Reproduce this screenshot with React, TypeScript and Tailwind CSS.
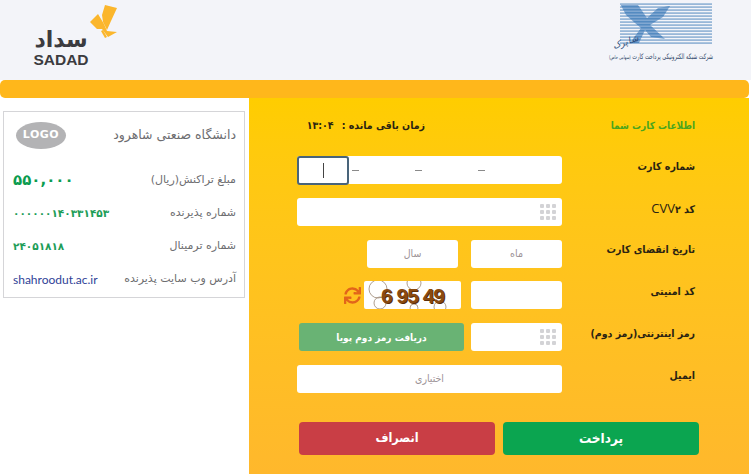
import React from "react";
import { FaSync } from "react-icons/fa";

const font = { fontFamily: '"DejaVu Sans", sans-serif' };

function Dots() {
  return (
    <svg width="16" height="16" viewBox="0 0 16 16" fill="#d3d3d6">
      {[0, 6, 12].flatMap((y) =>
        [0, 6, 12].map((x) => <rect key={`${x}-${y}`} x={x} y={y} width="4" height="4" rx="1" />)
      )}
    </svg>
  );
}

function SadadMark() {
  return (
    <svg width="30" height="36" viewBox="0 0 30 36" fill="#fbb62c">
      <polygon points="17,1 29,4 23,17 19,26 15,18 14,11" />
      <polygon points="2,18 10,10 16,20 19,27 29,28 20,33 14,25 9,25" />
      <polygon points="13,27 15,26 19,33 17,34" />
    </svg>
  );
}

function ShaparakMark() {
  const lines = Array.from({ length: 14 }, (_, i) => i * 3);
  return (
    <svg width="93" height="43" viewBox="0 0 93 43">
      <path d="M0.7 2 L18 2 L27 15 L38 5 L50 3 L43 14 L30 22 L45 36 L31 34 L25 27 L19 40 L10 40 L21 25 L15 20 L6 12 Z" fill="#4480bd" />
      {lines.map((y) => (
        <rect key={y} x="0" y={y + 0.5} width="92" height="1.2" fill="#6595c6" />
      ))}
      {lines.map((y) => (
        <rect key={`g${y}`} x="0" y={y + 1.7} width="92" height="1.3" fill="#f3f4f9" opacity="0.35" />
      ))}
    </svg>
  );
}

function Field({ label, children }: { label: React.ReactNode; children: React.ReactNode }) {
  return (
    <div className="flex h-[28px] items-center">
      <div className="w-[133px] shrink-0 pb-[7px] text-[10.5px] font-bold text-[#2a2312]">{label}</div>
      <div className="flex h-full w-[265px] items-stretch">{children}</div>
    </div>
  );
}

function Box({ className = "", children }: { className?: string; children?: React.ReactNode }) {
  return (
    <div className={`flex h-full items-center rounded-[3px] bg-white text-[10.5px] text-[#9c9296] ${className}`}>
      {children}
    </div>
  );
}

function InfoRow({ label, children, className = "" }: { label: string; children: React.ReactNode; className?: string }) {
  return (
    <div className={`flex h-[33px] items-center justify-between ${className}`}>
      <span className="text-[11px] text-[#6d6d70]">{label}</span>
      {children}
    </div>
  );
}

export default function App() {
  return (
    <div dir="rtl" className="h-[474px] w-[751px] overflow-hidden bg-white" style={font}>
      <header className="flex h-[80px] justify-between bg-[#f3f4f9] pl-[35px] pr-[38px]">
        <div className="flex h-full w-[100px] flex-col items-start pt-[3px]">
          <ShaparakMark />
          <div className="mr-[74px] mt-[-13px] h-[18px] -rotate-[20deg] whitespace-nowrap text-[9px] italic leading-[18px] text-[#2b4a78]" style={{ fontFamily: '"DejaVu Serif", serif' }}>
            شاپرک
          </div>
          <div className="scale-y-150 whitespace-nowrap text-[5px] leading-[10px] text-[#2f4468]">
            شرکت شبکه الکترونیکی پرداخت کارت <span className="text-[3.5px]">(سهامی خاص)</span>
          </div>
        </div>
        <div className="flex h-full w-[83px] flex-row-reverse items-start justify-end">
          <div className="flex w-[54px] flex-col items-center pt-[28px] text-[#3b3b40]">
            <div className="text-[22px] font-bold leading-[24px]">سداد</div>
            <div dir="ltr" className="text-[15.5px] font-bold leading-[16px]" style={{ fontFamily: '"Liberation Sans", sans-serif' }}>
              SADAD
            </div>
          </div>
          <div className="pt-[4px]">
            <SadadMark />
          </div>
        </div>
      </header>

      <div className="mr-[2px] h-[18px] w-[749px] rounded-[5px] bg-[#ffb71b]" />

      <div dir="ltr" className="mr-[2px] flex h-[376px] w-[749px]">
        <aside dir="rtl" className="w-[249px] pt-[13px]">
          <div className="ml-[3px] mr-[4px] h-[187px] w-[242px] border border-[#d5d5d8] bg-white pl-[9px] pr-[8px] pt-[7px]">
            <div className="flex h-[33px] items-center justify-between">
              <span className="text-[12.5px] font-medium text-[#6d6d70]">دانشگاه صنعتی شاهرود</span>
              <div dir="ltr" className="ml-[3px] flex h-[27px] w-[50px] items-center justify-center rounded-[50%] bg-[#b3b3b5] text-[11px] font-bold tracking-[0.5px] text-white">
                LOGO
              </div>
            </div>
            <InfoRow label="مبلغ تراکنش(ریال)" className="mt-[12px]">
              <span className="text-[15px] font-bold tracking-[1.5px] text-[#0c9c4f]">۵۵۰,۰۰۰</span>
            </InfoRow>
            <InfoRow label="شماره پذیرنده">
              <span className="text-[10.5px] font-bold tracking-[2.2px] text-[#1d9d58]">۰۰۰۰۰۰۱۴۰۳۳۱۴۵۳</span>
            </InfoRow>
            <InfoRow label="شماره ترمینال">
              <span className="text-[10.5px] font-bold tracking-[1.2px] text-[#1d9d58]">۲۴۰۵۱۸۱۸</span>
            </InfoRow>
            <InfoRow label="آدرس وب سایت پذیرنده">
              <span dir="ltr" className="text-[12px] text-[#2f3f97]" style={{ fontFamily: "Lato, sans-serif" }}>
                shahroodut.ac.ir
              </span>
            </InfoRow>
          </div>
        </aside>

        <main dir="rtl" className="flex h-full w-[500px] flex-col bg-gradient-to-b from-[#ffcd00] to-[#ffb82c] pl-[48px] pr-[54px] pt-[19px] font-stretch-condensed">
          <div className="flex h-[17px] items-center whitespace-nowrap font-bold">
            <div className="w-[270px] text-[10px] text-[#4ba51e]">اطلاعات کارت شما</div>
            <div className="text-[10.5px] text-[#2a2312]">
              زمان باقی مانده :<span className="mr-[8px] tracking-[0.5px]">۱۳:۰۴</span>
            </div>
          </div>

          <div className="mt-[22px] flex flex-col gap-[13.8px]">
            <Field label="شماره کارت">
              <Box className="relative w-full text-[#8a8a8a]">
                <div dir="ltr" className="flex h-full w-full items-center">
                  <div className="relative z-10 flex h-[29px] w-[52px] items-center justify-center rounded-[3px] border-2 border-[#49647a] bg-white">
                    <span className="h-[15px] w-px bg-[#444]" />
                  </div>
                  <span className="ml-[3px] h-px w-[7px] bg-[#8a8a8a]" />
                  <span className="ml-[56px] h-px w-[7px] bg-[#8a8a8a]" />
                  <span className="ml-[56px] h-px w-[7px] bg-[#8a8a8a]" />
                </div>
              </Box>
            </Field>
            <Field
              label={
                <span>
                  کد{" "}
                  <span className="text-[13px] font-normal font-stretch-normal" style={{ fontFamily: '"Open Sans", sans-serif' }}>
                    CVV
                  </span>
                  ۲
                </span>
              }
            >
              <Box className="w-full justify-start pr-[6px]">
                <Dots />
              </Box>
            </Field>
            <Field label="تاریخ انقضای کارت">
              <div className="flex w-full gap-[13px]">
                <Box className="w-[91px] justify-center">ماه</Box>
                <Box className="w-[91px] justify-center">سال</Box>
              </div>
            </Field>
            <Field label="کد امنیتی">
              <div className="flex w-full items-center">
                <Box className="w-[91px]" />
                <div className="relative mr-[10px] flex h-full w-[97px] items-center justify-center overflow-hidden rounded-[2px] bg-white">
                  <svg className="absolute inset-0" width="97" height="28" viewBox="0 0 97 28" fill="none" stroke="#9a8674" strokeWidth="0.8">
                    <circle cx="14" cy="8" r="9" />
                    <circle cx="16" cy="22" r="6" />
                    <circle cx="50" cy="2" r="7" />
                    <circle cx="76" cy="26" r="6" />
                    <circle cx="50" cy="27" r="4" />
                  </svg>
                  <span dir="ltr" className="relative text-[21px] font-bold tracking-[-1px] text-[#8a4a10] [text-shadow:1px_1px_0_#5b2e08]" style={{ fontFamily: '"Liberation Sans", sans-serif' }}>
                    6 95 49
                  </span>
                </div>
                <FaSync className="mr-[3px] h-[17px] w-[17px] text-[#e2651a]" />
              </div>
            </Field>
            <Field label="رمز اینترنتی(رمز دوم)">
              <div className="flex w-full gap-[7px]">
                <Box className="w-[91px] justify-start pr-[6px]">
                  <Dots />
                </Box>
                <div className="flex h-full w-[165px] items-center justify-center rounded-[3px] bg-[#69b374] text-[10px] font-bold text-white">
                  دریافت رمز دوم پویا
                </div>
              </div>
            </Field>
            <Field label="ایمیل">
              <Box className="w-full justify-center">اختیاری</Box>
            </Field>
          </div>

          <div className="-mr-[4px] mt-[29px] flex w-[400px] gap-[8px]">
            <button className="h-[33px] w-[196px] rounded-[4px] bg-[#0ba550] text-[13.5px] font-bold text-white">پرداخت</button>
            <button className="h-[33px] w-[196px] rounded-[4px] bg-[#c93e45] text-[12.5px] font-bold text-white">انصراف</button>
          </div>
        </main>
      </div>
    </div>
  );
}
